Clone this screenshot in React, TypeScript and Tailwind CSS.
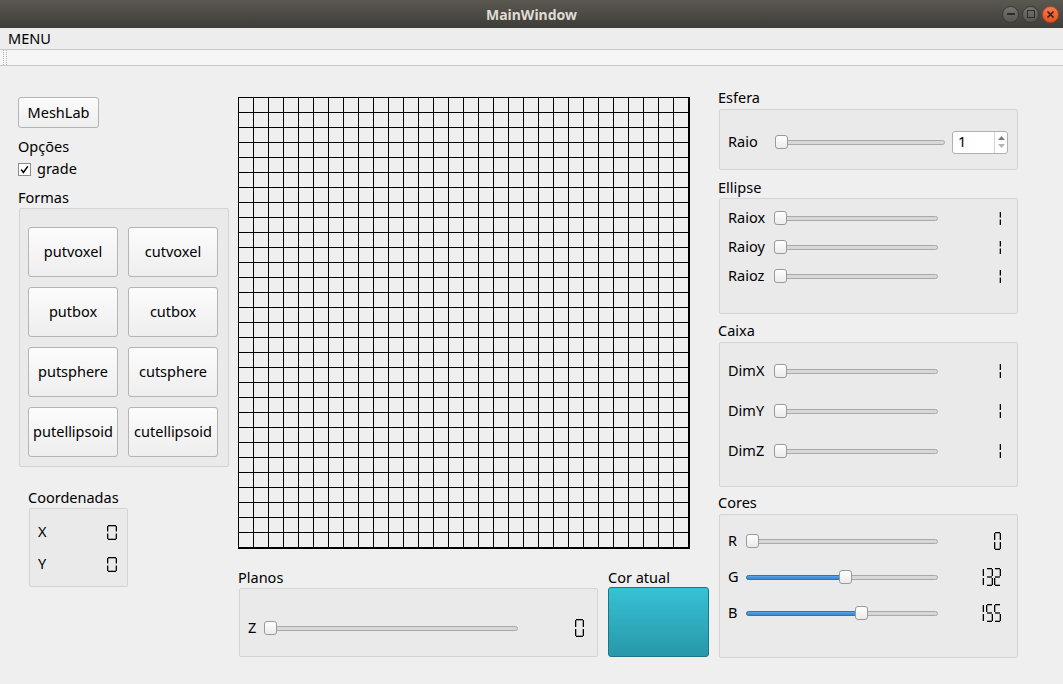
import React from "react";

const SEGS: Record<string, string> = {
  "0": "abcdef",
  "1": "bc",
  "2": "abged",
  "3": "abgcd",
  "4": "fgbc",
  "5": "afgcd",
  "6": "afgedc",
  "7": "abc",
  "8": "abcdefg",
  "9": "abcdfg",
};

// 7-segment digit like QLCDNumber (flat style)
const Digit = ({ ch, w, h }: { ch: string; w: number; h: number }) => {
  const on = SEGS[ch] || "";
  const t = 0.65;
  const m = h / 2;
  const g = 1.0;
  const seg: Record<string, number[]> = {
    a: [g, t, w - g, t],
    b: [w - t, g, w - t, m - g],
    c: [w - t, m + g, w - t, h - g],
    d: [g, h - t, w - g, h - t],
    e: [t, m + g, t, h - g],
    f: [t, g, t, m - g],
    g: [g, m, w - g, m],
  };
  return (
    <svg width={w} height={h} className="block">
      {on.split("").map((s) => {
        const [x1, y1, x2, y2] = seg[s];
        return <line key={s} x1={x1} y1={y1} x2={x2} y2={y2} stroke="#000" strokeWidth={1.3} />;
      })}
    </svg>
  );
};

const Lcd = ({ value, w, h }: { value: string; w: number; h: number }) => (
  <div className="flex gap-[1.5px]">
    {value.split("").map((c, i) => (
      <Digit key={i} ch={c} w={w} h={h} />
    ))}
  </div>
);

const Slider = ({ className, pos, fill }: { className: string; pos: number; fill?: boolean }) => (
  <div className={"relative h-[14px] shrink-0 " + className}>
    <div className="absolute inset-x-0 top-[5px] h-[5px] rounded-full border border-[#a9a9a9] bg-[#d8d8d8]" />
    {fill && (
      <div
        className="absolute left-0 top-[5px] h-[5px] rounded-l-full border border-[#2f74b5] bg-gradient-to-b from-[#5aa6e6] to-[#3386d2]"
        style={{ width: pos + 6 }}
      />
    )}
    <div
      className="absolute top-0 h-[14px] w-[13px] rounded-[3px] border border-[#9a9a9a] bg-gradient-to-b from-white to-[#ebebeb]"
      style={{ left: pos }}
    />
  </div>
);

const Group = ({ className, children }: { className: string; children?: React.ReactNode }) => (
  <div className={"rounded-[2px] border border-[#d4d4d4] bg-[#eaeaea] " + className}>{children}</div>
);

const Label = ({ children, className = "" }: { children: React.ReactNode; className?: string }) => (
  <div className={"flex h-[20px] items-center pt-[1px] " + className}>{children}</div>
);

const Btn = ({ children, className = "" }: { children: React.ReactNode; className?: string }) => (
  <div
    className={
      "flex items-center justify-center rounded-[3px] border border-[#b5b5b5] bg-gradient-to-b from-[#fcfcfc] to-[#eeeeee] " +
      className
    }
  >
    {children}
  </div>
);

const Grid = () => {
  const lines: React.ReactNode[] = [];
  for (let i = 0; i <= 30; i++) {
    const p = i * 15 + 0.5;
    lines.push(<line key={"v" + i} x1={p} y1={0} x2={p} y2={452} />);
    lines.push(<line key={"h" + i} x1={0} y1={p} x2={452} y2={p} />);
  }
  return (
    <svg width={452} height={452} className="block" shapeRendering="crispEdges">
      <g stroke="#000" strokeWidth={1}>
        {lines}
        <line x1={451.5} y1={0} x2={451.5} y2={452} />
        <line x1={0} y1={451.5} x2={452} y2={451.5} />
      </g>
    </svg>
  );
};

const TitleBar = () => (
  <div className="grid h-[28px] shrink-0 grid-cols-[1fr_auto_1fr] items-center bg-gradient-to-b from-[#5b5852] to-[#3f3d39]">
    <div />
    <div className="text-[14px] font-bold text-[#dfdbd2]">MainWindow</div>
    <div className="flex items-center justify-end gap-[3px] pr-[4px]">
      <div className="flex h-[17px] w-[17px] items-center justify-center rounded-full border border-[#3a3935] bg-gradient-to-b from-[#76746e] to-[#57554f]">
        <div className="h-[2px] w-[8px] bg-[#2e2d2a]" />
      </div>
      <div className="flex h-[17px] w-[17px] items-center justify-center rounded-full border border-[#3a3935] bg-gradient-to-b from-[#76746e] to-[#57554f]">
        <div className="h-[8px] w-[8px] border-[1.5px] border-[#2e2d2a]" />
      </div>
      <div className="flex h-[17px] w-[17px] items-center justify-center rounded-full border border-[#b8421c] bg-gradient-to-b from-[#f47a4b] to-[#e3531f]">
        <svg width="9" height="9" viewBox="0 0 9 9">
          <path d="M1.5 1.5 L7.5 7.5 M7.5 1.5 L1.5 7.5" stroke="#3a1a0e" strokeWidth="1.6" />
        </svg>
      </div>
    </div>
  </div>
);

export default function App() {
  const rowR = "flex h-[20px] items-center";
  return (
    <div className="flex h-[684px] w-[1063px] flex-col overflow-hidden bg-[#efefef] font-['Noto_Sans','DejaVu_Sans',sans-serif] text-[14.5px] text-black">
      <TitleBar />
      <div className="flex h-[21px] shrink-0 items-center bg-[#ededed] pl-[8px]">MENU</div>
      <div className="flex h-[17px] shrink-0 items-stretch gap-[2px] border-y border-[#c8c8c8] bg-[#f6f6f6] pl-[3px]">
        <div className="border-l border-dotted border-[#b5b5b5]" />
        <div className="border-l border-dotted border-[#b5b5b5]" />
      </div>

      <div className="flex flex-1">
        {/* left column */}
        <div className="ml-[18px] flex w-[211px] flex-col pt-[31px]">
          <Btn className="h-[31px] w-[81px]">MeshLab</Btn>
          <Label className="mt-[8px]">Opções</Label>
          <div className="mt-[3px] flex h-[20px] items-center">
            <div className="flex h-[13px] w-[13px] items-center justify-center border border-[#8c8c8c] bg-white">
              <svg width="11" height="11" viewBox="0 0 11 11">
                <path d="M2.2 5.6 L4.4 8.4 L8.8 2.4" fill="none" stroke="#000" strokeWidth="1.6" />
              </svg>
            </div>
            <span className="ml-[6px]">grade</span>
          </div>
          <Label className="mt-[8px]">Formas</Label>
          <Group className="ml-[1px] mt-[1px] h-[259px] w-[210px] pl-[8px] pt-[18px]">
            <div className="grid grid-cols-[90px_90px] gap-[10px]">
              {["putvoxel", "cutvoxel", "putbox", "cutbox", "putsphere", "cutsphere", "putellipsoid", "cutellipsoid"].map(
                (b) => (
                  <Btn key={b} className="h-[50px]">
                    {b}
                  </Btn>
                )
              )}
            </div>
          </Group>
          <Label className="mt-[20px] pl-[10px]">Coordenadas</Label>
          <Group className="ml-[11px] mt-[1px] flex h-[79px] w-[99px] flex-col gap-[12px] pl-[8px] pr-[10px] pt-[13px]">
            <div className="flex h-[20px] items-center justify-between">
              <span>X</span>
              <Lcd value="0" w={10} h={15} />
            </div>
            <div className="flex h-[20px] items-center justify-between">
              <span>Y</span>
              <Lcd value="0" w={10} h={15} />
            </div>
          </Group>
        </div>

        {/* center column */}
        <div className="ml-[9px] flex w-[470px] flex-col pt-[31px]">
          <Grid />
          <div className="mt-[18px] flex">
            <div className="flex w-[360px] flex-col">
              <Label>Planos</Label>
              <Group className="ml-[1px] mt-[1px] h-[69px] w-[359px] pl-[8px] pr-[13px] pt-[29px]">
                <div className={rowR}>
                  <span className="w-[16px]">Z</span>
                  <Slider className="w-[254px]" pos={0} />
                  <div className="flex-1" />
                  <Lcd value="0" w={9} h={18} />
                </div>
              </Group>
            </div>
            <div className="ml-[10px] flex w-[100px] flex-col">
              <Label>Cor atual</Label>
              <div className="h-[70px] w-[101px] rounded-[3px] border border-[#1d7583] bg-gradient-to-b from-[#36c2d5] to-[#2898aa]" />
            </div>
          </div>
        </div>

        {/* right column */}
        <div className="ml-[10px] flex w-[300px] flex-col pt-[21px]">
          <Label>Esfera</Label>
          <Group className="ml-[1px] mt-[2px] h-[61px] w-[299px] pl-[8px] pt-[20px]">
            <div className="flex h-[24px] items-center">
              <span className="w-[47px]">Raio</span>
              <Slider className="w-[170px]" pos={0} />
              <div className="ml-[7px] flex h-[23px] w-[56px] rounded-[3px] border border-[#b0b0b0] bg-white">
                <div className="flex flex-1 items-center pl-[5px]">1</div>
                <div className="flex w-[13px] flex-col items-center justify-center gap-[4px] border-l border-[#d6d6d6]">
                  <svg width="7" height="4" viewBox="0 0 7 4">
                    <path d="M0 4 L3.5 0 L7 4 Z" fill="#7a7a7a" />
                  </svg>
                  <svg width="7" height="4" viewBox="0 0 7 4">
                    <path d="M0 0 L3.5 4 L7 0 Z" fill="#b4b4b4" />
                  </svg>
                </div>
              </div>
            </div>
          </Group>

          <Label className="mt-[7px]">Ellipse</Label>
          <Group className="ml-[1px] mt-[1px] flex h-[116px] w-[299px] flex-col gap-[9px] pl-[8px] pr-[16px] pt-[9px]">
            {["Raiox", "Raioy", "Raioz"].map((l) => (
              <div key={l} className={rowR}>
                <span className="w-[46px]">{l}</span>
                <Slider className="w-[164px]" pos={0} />
                <div className="flex-1" />
                <Lcd value="1" w={8} h={15} />
              </div>
            ))}
          </Group>

          <Label className="mt-[6px]">Caixa</Label>
          <Group className="ml-[1px] mt-[2px] flex h-[145px] w-[299px] flex-col gap-[20px] pl-[8px] pr-[16px] pt-[18px]">
            {["DimX", "DimY", "DimZ"].map((l) => (
              <div key={l} className={rowR}>
                <span className="w-[46px]">{l}</span>
                <Slider className="w-[164px]" pos={0} />
                <div className="flex-1" />
                <Lcd value="1" w={8} h={16} />
              </div>
            ))}
          </Group>

          <Label className="mt-[5px]">Cores</Label>
          <Group className="ml-[1px] mt-[2px] flex h-[144px] w-[299px] flex-col gap-[16px] pl-[8px] pr-[16px] pt-[16px]">
            {[
              { l: "R", v: "0", p: 0 },
              { l: "G", v: "132", p: 93 },
              { l: "B", v: "155", p: 109 },
            ].map((r) => (
              <div key={r.l} className={rowR}>
                <span className="w-[18px]">{r.l}</span>
                <Slider className="w-[192px]" pos={r.p} fill={r.p > 0} />
                <div className="flex-1" />
                <Lcd value={r.v} w={7} h={18} />
              </div>
            ))}
          </Group>
        </div>
      </div>
    </div>
  );
}
